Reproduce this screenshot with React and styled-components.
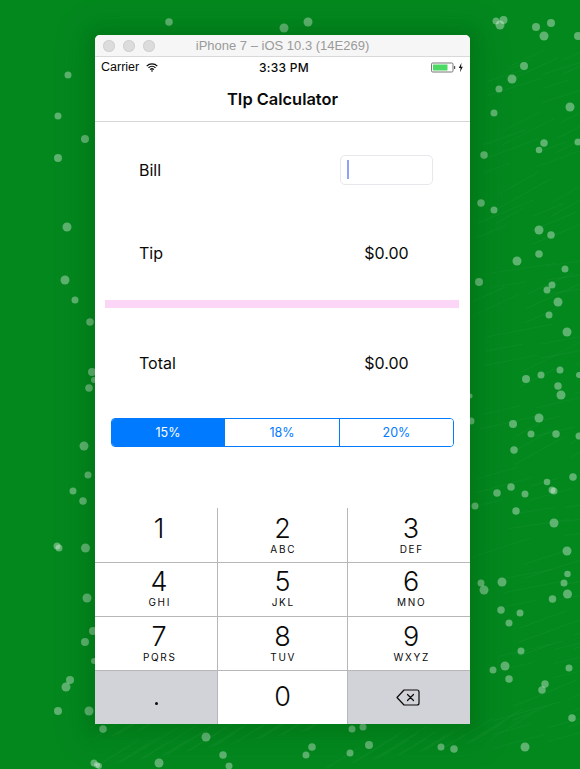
import React from "react";
import styled, { createGlobalStyle } from "styled-components";

const Global = createGlobalStyle`
  html, body { margin: 0; padding: 0; }
  body { background: #03881e; }
`;

const Desktop = styled.div`
  position: relative;
  width: 580px;
  height: 769px;
  overflow: hidden;
  padding: 35px 0 0 95px;
  box-sizing: border-box;
  background: #03881e;
  font-family: Inter, "Liberation Sans", sans-serif;
  color: #0a0a0a;
`;
const Wallpaper = styled.svg`
  position: absolute;
  inset: 0;
`;
const Device = styled.div`
  position: relative;
  width: 375px;
  height: 689px;
  display: flex;
  flex-direction: column;
  background: #fff;
  border-radius: 5px 5px 0 0;
  box-shadow: 0 0 12px 6px rgba(0, 60, 10, 0.1), 0 4px 30px 16px rgba(0, 60, 10, 0.1);
`;
const TitleBar = styled.div`
  height: 21px;
  flex: none;
  position: relative;
  display: flex;
  align-items: center;
  justify-content: center;
  background: #f6f6f6;
  border-radius: 5px 5px 0 0;
  border-bottom: 1px solid #d9d9d9;
  color: #9a9a9a;
  font-family: "Liberation Sans", Arial, sans-serif;
  font-size: 13px;
`;
const Lights = styled.div`
  position: absolute;
  left: 8px;
  top: 5px;
  display: flex;
  gap: 8px;
`;
const Light = styled.span`
  width: 12px;
  height: 12px;
  border-radius: 50%;
  background: #dcdcdc;
  box-shadow: inset 0 0 0 1px #d2d2d2;
`;
const StatusBar = styled.div`
  height: 20px;
  flex: none;
  display: grid;
  grid-template-columns: 1fr auto 1fr;
  align-items: center;
  padding: 0 7px 0 6px;
  font-size: 12px;
`;
const Carrier = styled.div`
  display: flex;
  align-items: center;
  gap: 7px;
  font-family: "Liberation Sans", Arial, sans-serif;
  font-size: 12.5px;
`;
const Clock = styled.div`
  margin-left: 4px;
  font-weight: 500;
  font-size: 12px;
  letter-spacing: 0.3px;
`;
const Power = styled.div`
  display: flex;
  justify-content: flex-end;
  align-items: center;
`;
const Nav = styled.div`
  height: 44px;
  flex: none;
  display: flex;
  align-items: center;
  justify-content: center;
  border-bottom: 1px solid #d6d6d8;
  font-size: 16.4px;
  font-weight: 600;
`;
const Row = styled.div`
  height: 30px;
  flex: none;
  margin-top: ${(p) => p.$top}px;
  padding: 0 37px 0 44px;
  display: flex;
  align-items: center;
  justify-content: space-between;
  font-size: 16px;
`;
const Field = styled.div`
  width: 93px;
  height: 30px;
  box-sizing: border-box;
  border: 1px solid #e7e7ec;
  border-radius: 5px;
  padding: 4px 6px;
`;
const Caret = styled.div`
  width: 2px;
  height: 19px;
  background: #8ea3f6;
`;
const Value = styled.div`
  width: 93px;
  text-align: center;
`;
const Divider = styled.div`
  height: 8px;
  flex: none;
  margin: 32px 11px 0 10px;
  background: #fcd6f6;
`;
const Segments = styled.div`
  height: 29px;
  flex: none;
  box-sizing: border-box;
  margin: 40px 16px 0 16px;
  border: 1px solid #007aff;
  border-radius: 4px;
  display: grid;
  grid-template-columns: 113px 115px 1fr;
  overflow: hidden;
`;
const Segment = styled.div`
  display: flex;
  align-items: center;
  justify-content: center;
  font-size: 12.5px;
  background: ${(p) => (p.$active ? "#007aff" : "#fff")};
  color: ${(p) => (p.$active ? "#fff" : "#007aff")};
  border-right: ${(p) => (p.$last ? "none" : "1px solid #007aff")};
`;
const Keypad = styled.div`
  margin-top: 61px;
  display: grid;
  grid-template-columns: 123px 130px 122px;
  grid-template-rows: 55px 54px 54px 53px;
`;
const Key = styled.div`
  box-sizing: border-box;
  display: flex;
  flex-direction: column;
  align-items: center;
  background: ${(p) => (p.$dark ? "#d2d3d8" : "#fff")};
  border-right: ${(p) => (p.$end ? "none" : "1px solid #b7b7ba")};
  border-bottom: ${(p) => (p.$bottom ? "none" : "1px solid #b7b7ba")};
  padding-top: ${(p) => p.$top}px;
  padding-left: ${(p) => p.$shift || 0}px;
`;
const Digit = styled.div`
  font-size: 27px;
  font-weight: 300;
  line-height: 28px;
  height: 28px;
`;
const Letters = styled.div`
  font-size: 10px;
  letter-spacing: 1.7px;
  line-height: 12px;
  font-weight: 400;
  padding-left: 1.5px;
`;
const Dot = styled.div`
  width: 3px;
  height: 3px;
  border-radius: 50%;
  background: #0a0a0a;
  margin-top: 22px;
`;
const BackspaceGlyph = styled.svg`
  margin: 9px 2px 0 0;
`;

const dots = [
  [68,75,6],[496,21,6],[503.5,20,7],[500,25,8],[536,27,7],[551,23,7],[544,36,8],[578,36,7],[524,66,7],[512,79,8],[499,89,6],
  [58,116,6],[85,139,7],[58,158,7],[67,227,8],[65,280,8],[75,300,6],[90,322,6.5],[92,372,7],[94,380,5],[89,388,6.5],
  [84,446,8],[88,475,6],[73,491,6],[83,501,6.5],[57,546,6],[59,548,6],[85.5,548,8],[87,598,8],[93,631,7],[85,642,7],[94,661,5],[70,680,7],[66,687,8],[58,711,7],[89,711,8],[94,763,6],
  [494,113,6],[570,107,8],[544,143,6.5],[539,150,5.5],[578,142,6],[484,155,6.5],[481,203,6.5],[494,210,6],[539,230,8],[551,235,6.5],[539,254,6.5],[517,261,8],[565,269,6],[479,282,7],[552,285,6],[547,290,6],[558,302,8],[549,315,6],[567,332,8],[560,370,6],[541,375,6],[579,375,5],[558,386,6.5],[561,395,8],[526,379,7],[470,396,4],[471,421,6],[513,424,7],[539,418,8],
  [531,434,6],[556,434,6.5],[579,436,6],[514,450,6.5],[573,477,6.5],[547,482,5.5],[511,487,6.5],[497,493,6.5],[525,494,6],[552,490,6],[554,491,6],[475,506,6],[516,511,6.5],[554,523,8],[567,551,8],[567.5,574,5.5],[564,583,6],[567.5,594,8],[552.5,599,6.5],[481,583,6],[484,590,8],[502,582,8],[501,610,6.5],[520,613,6],[509,623,6],[521,651,6],[505,666,8],[493,670,6],[569,668,6],[509,679,6.5],[545,684,6.5],[542,690,6.5],[572,718,6.5],[525,747,8],
  [103,729,6.5],[206,737,8],[352,729,6],[363,727,6],[223,755,6.5],[159,763,8],[97,765,5],[99,766,5],[229,766,6],[312,747,6.5],[306,755,6],[350,753,6],[369,745,7],[441,747,6],[454,749,6.5],
  [169,22,6.5],[284,28,8],[308,22,8],
];

const streaks = Array.from({ length: 150 }, (_, i) => {
  const a = (i * 73) % 151;
  const b = (i * 37) % 101;
  const x = i % 3 === 0 ? 90 + ((a * 3.1) % 400) : 472 + ((a * 0.73) % 108);
  const y = i % 3 === 0 ? 728 + b * 0.4 : 60 + ((b * 7.1) % 700);
  const len = 25 + ((i * 11) % 45);
  const ang = i % 3 === 0 ? -0.55 : -0.15 - ((i * 7) % 10) * 0.04;
  return [x, y, x + Math.cos(ang) * len, y + Math.sin(ang) * len];
});

const WifiIcon = () => (
  <svg width="12" height="9" viewBox="0 0 12 9" fill="none" stroke="#0a0a0a" strokeWidth="1.3">
    <path d="M.7 3.1a7.5 7.5 0 0 1 10.6 0" />
    <path d="M2.5 4.9a5 5 0 0 1 7 0" />
    <path d="M4.2 6.6a2.6 2.6 0 0 1 3.6 0" />
    <path d="M6 9 4.9 7.8a1.6 1.6 0 0 1 2.2 0Z" fill="#0a0a0a" stroke="none" />
  </svg>
);
const BatteryIcon = () => (
  <svg width="32" height="11" viewBox="0 0 32 11">
    <rect x=".5" y="1" width="21.5" height="9" rx="1.2" fill="none" stroke="#777" />
    <rect x="2" y="2.5" width="14.5" height="6" fill="#4cd964" />
    <rect x="23" y="4" width="1.2" height="3" fill="#555" />
    <path d="M30.5 .8 27.8 6h1.8L29 10.2 31.8 4.8H30Z" fill="#111" />
  </svg>
);
const BackspaceIcon = () => (
  <BackspaceGlyph width="24" height="17" viewBox="0 0 24 17" fill="none" stroke="#0a0a0a" strokeWidth="1.2" strokeLinejoin="round" strokeLinecap="round">
    <path d="M8 1h13a2 2 0 0 1 2 2v11a2 2 0 0 1-2 2H8L1 8.5Z" />
    <path d="M11.5 5.5l6 6M17.5 5.5l-6 6" />
  </BackspaceGlyph>
);

const rows = [
  ["1", ""], ["2", "ABC"], ["3", "DEF"],
  ["4", "GHI"], ["5", "JKL"], ["6", "MNO"],
  ["7", "PQRS"], ["8", "TUV"], ["9", "WXYZ"],
];
const rowTop = [7, 5, 6];
const colShift = [6, 0, 4];

export default function App() {
  return (
    <Desktop>
      <Global />
      <Wallpaper width="580" height="769" viewBox="0 0 580 769">
        {streaks.map(([x1, y1, x2, y2], i) => (
          <line key={i} x1={x1} y1={y1} x2={x2} y2={y2} stroke="#fff" strokeOpacity="0.035" />
        ))}
        {dots.map(([x, y, d], i) => (
          <circle key={i} cx={x} cy={y} r={(d + 1) / 2} fill="#fff" fillOpacity="0.36" />
        ))}
      </Wallpaper>
      <Device>
        <TitleBar>
          <Lights>
            <Light /><Light /><Light />
          </Lights>
          iPhone 7 – iOS 10.3 (14E269)
        </TitleBar>
        <StatusBar>
          <Carrier>Carrier <WifiIcon /></Carrier>
          <Clock>3:33 PM</Clock>
          <Power><BatteryIcon /></Power>
        </StatusBar>
        <Nav>TIp Calculator</Nav>
        <Row $top={33}>
          <span>Bill</span>
          <Field><Caret /></Field>
        </Row>
        <Row $top={53}>
          <span>Tip</span>
          <Value>$0.00</Value>
        </Row>
        <Divider />
        <Row $top={40}>
          <span>Total</span>
          <Value>$0.00</Value>
        </Row>
        <Segments>
          <Segment $active>15%</Segment>
          <Segment>18%</Segment>
          <Segment $last>20%</Segment>
        </Segments>
        <Keypad>
          {rows.map(([d, l], i) => (
            <Key key={d} $end={i % 3 === 2} $top={rowTop[Math.floor(i / 3)]} $shift={colShift[i % 3]}>
              <Digit>{d}</Digit>
              <Letters>{l}</Letters>
            </Key>
          ))}
          <Key $dark $bottom $top={9}><Dot /></Key>
          <Key $bottom $top={12}><Digit>0</Digit></Key>
          <Key $dark $bottom $end $top={9}><BackspaceIcon /></Key>
        </Keypad>
      </Device>
    </Desktop>
  );
}
